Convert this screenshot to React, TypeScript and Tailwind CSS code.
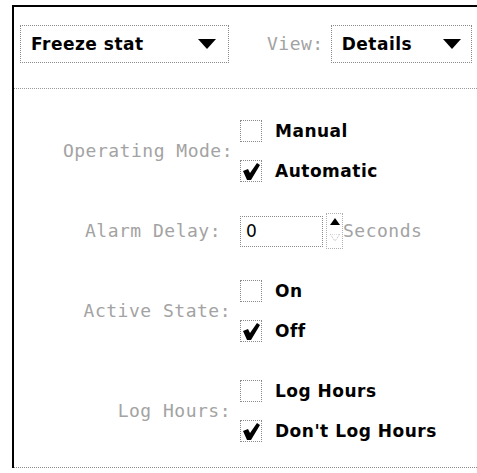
import React from 'react';

const boldFont = { fontFamily: '"DejaVu Sans", Verdana, sans-serif' };
const dimFont = { fontFamily: '"DejaVu Sans Mono", "Liberation Mono", monospace' };

function Arrow() {
  return (
    <svg width="18" height="10" viewBox="0 0 18 10" className="shrink-0">
      <polygon points="0,0 18,0 9,10" fill="#000" />
    </svg>
  );
}

function Popup({ label, width, pr }: { label: string; width: string; pr: string }) {
  return (
    <div
      className={`${width} ${pr} h-[38px] flex items-center justify-between pl-[10px] border border-dotted border-[#8a8a8a]`}
    >
      <span className="text-[17px] font-bold tracking-[0.5px] text-black leading-none" style={boldFont}>
        {label}
      </span>
      <Arrow />
    </div>
  );
}

function Check({ checked, label }: { checked?: boolean; label: string }) {
  return (
    <div className="h-[40px] flex items-center gap-[13px]">
      <div className="w-[22px] h-[22px] border border-dotted border-[#8a8a8a] relative">
        {checked && (
          <svg width="22" height="22" viewBox="0 0 22 22" className="absolute -left-px -top-px">
            <polygon points="3,11 8,9 10,13 17,3 20,5 11,20 7,20" fill="#000" />
          </svg>
        )}
      </div>
      <span className="text-[17px] font-bold tracking-[0.5px] text-black leading-none" style={boldFont}>
        {label}
      </span>
    </div>
  );
}

function Dim({ children }: { children: React.ReactNode }) {
  return (
    <span className="text-[18px] tracking-[0.5px] text-[#a3a3a3] leading-none" style={dimFont}>
      {children}
    </span>
  );
}

export default function App() {
  return (
    <div className="w-[477px] h-[473px] bg-white overflow-hidden pt-[5px] pl-[12px]">
      <div className="h-[463px] flex flex-col border-l-2 border-t-2 border-black">
        {/* top bar with the two popups */}
        <div className="h-[81px] pt-[18px] pl-[6px] flex items-start">
          <Popup label="Freeze stat" width="w-[209px]" pr="pr-[12px]" />
          <div className="ml-[38px] h-[38px] flex items-center">
            <Dim>View:</Dim>
          </div>
          <div className="ml-[7px]">
            <Popup label="Details" width="w-[141px]" pr="pr-[10px]" />
          </div>
        </div>
        <div className="border-t border-dotted border-[#9a9a9a]" />

        {/* settings form */}
        <div className="flex-1 pt-[22px] grid grid-cols-[219px_1fr] gap-x-[7px] gap-y-[20px] content-start">
          <div className="self-center text-right">
            <Dim>Operating Mode:</Dim>
          </div>
          <div className="flex flex-col">
            <Check label="Manual" />
            <Check label="Automatic" checked />
          </div>

          <div className="self-center text-right pr-[12px]">
            <Dim>Alarm Delay:</Dim>
          </div>
          <div className="h-[40px] flex items-center">
            <div className="w-[83px] h-[31px] border border-dotted border-[#8a8a8a] flex items-center pl-[5px]">
              <span className="text-[17px] text-black leading-none" style={{ fontFamily: '"DejaVu Sans", sans-serif' }}>
                0
              </span>
            </div>
            <div className="ml-[3px] w-[17px] h-[36px] border border-dotted border-[#b0b0b0] flex flex-col items-center pt-[4px] gap-[9px]">
              <svg width="10" height="7" viewBox="0 0 10 7">
                <polygon points="5,0 10,7 0,7" fill="#000" />
              </svg>
              <svg width="10" height="7" viewBox="0 0 10 7">
                <polygon points="0,0 10,0 5,7" fill="none" stroke="#bbb" strokeDasharray="1 1" />
              </svg>
            </div>
            <Dim>Seconds</Dim>
          </div>

          <div className="self-center text-right pr-[2px]">
            <Dim>Active State:</Dim>
          </div>
          <div className="flex flex-col">
            <Check label="On" />
            <Check label="Off" checked />
          </div>

          <div className="self-center text-right pr-[2px]">
            <Dim>Log Hours:</Dim>
          </div>
          <div className="flex flex-col">
            <Check label="Log Hours" />
            <Check label="Don't Log Hours" checked />
          </div>
        </div>
        <div className="h-[5px] border-b border-dotted border-[#8a8a8a]" />
      </div>
    </div>
  );
}
